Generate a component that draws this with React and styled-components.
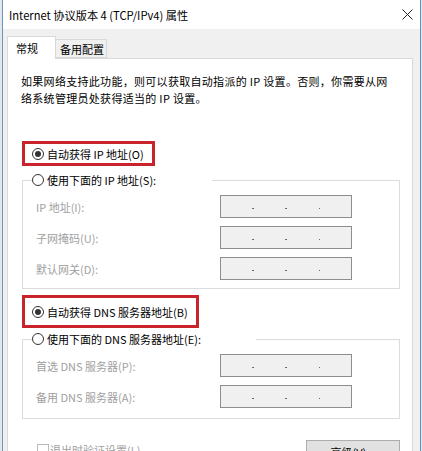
import React from "react";
import styled, { createGlobalStyle } from "styled-components";

const Global = createGlobalStyle`
  html, body { margin: 0; padding: 0; background: #dfe7ef; }
  body { font-family: "Noto Sans CJK SC", "Noto Sans", sans-serif; font-size: 11px; color: #000; }
  * { box-sizing: border-box; }
`;

const Window = styled.div`
  margin-left: 2px;
  width: 419px;
  height: 451px;
  border-left: 1px solid #7393b6;
  border-right: 1px solid #5f8fc4;
  background: #f0f0f0;
  display: flex;
  flex-direction: column;
  overflow: hidden;
`;

const TitleBar = styled.div`
  height: 29px;
  flex: none;
  background: #fff;
  display: flex;
  align-items: center;
  padding-left: 6px;
`;

const Title = styled.div`
  flex: 1;
  font-size: 11.2px;
  line-height: 16px;
  padding-top: 1px;
  white-space: nowrap;
`;

const CloseButton = styled.div`
  width: 26px;
  height: 29px;
  display: flex;
  align-items: center;
  justify-content: center;
`;

const Body = styled.div`
  flex: 1;
  padding: 7px 7px 0 4px;
  display: flex;
  flex-direction: column;
`;

const Tabs = styled.div`
  display: flex;
  align-items: flex-end;
  height: 23px;
  margin-bottom: -1px;
  position: relative;
  z-index: 1;
`;

const Tab = styled.div`
  height: ${(p) => (p.$active ? 23 : 19)}px;
  padding: ${(p) => (p.$active ? "0 17px 0 8px" : "0 2px 0 4px")};
  margin-bottom: ${(p) => (p.$active ? 0 : 1)}px;
  background: ${(p) => (p.$active ? "#fff" : "#f0f0f0")};
  border: 1px solid #d9d9d9;
  border-bottom: ${(p) => (p.$active ? "none" : "1px solid #d9d9d9")};
  border-left: ${(p) => (p.$active ? "1px solid #d9d9d9" : "none")};
  display: flex;
  align-items: center;
  font-size: 11px;
  white-space: nowrap;
`;

const Panel = styled.div`
  flex: 1;
  background: #fff;
  border: 1px solid #d9d9d9;
  border-bottom: none;
  padding: 14px 12px 0 14px;
  display: flex;
  flex-direction: column;
`;

const Desc = styled.p`
  margin: 0 0 0 -1px;
  line-height: 17px;
  font-size: 11px;
  letter-spacing: 0.3px;
  white-space: nowrap;
`;

const Highlight = styled.div`
  align-self: flex-start;
  margin-top: ${(p) => p.$mt}px;
  height: ${(p) => p.$h}px;
  border: 3px solid #c9232b;
  padding: 0 8px 0 7px;
  display: flex;
  align-items: center;
`;

const RadioRow = styled.label`
  display: flex;
  align-items: center;
  gap: 3px;
  white-space: nowrap;
  font-size: 11px;
  line-height: 16px;
`;

const RadioCircle = styled.span`
  width: 12px;
  height: 12px;
  flex: none;
  border-radius: 50%;
  border: 1px solid #333;
  background: #fff;
  display: flex;
  align-items: center;
  justify-content: center;
  &::after {
    content: "";
    width: 6px;
    height: 6px;
    border-radius: 50%;
    background: ${(p) => (p.$checked ? "#333" : "transparent")};
  }
`;

const Group = styled.fieldset`
  margin: ${(p) => p.$mt}px 0 0 0;
  border: 1px solid #dcdcdc;
  padding: 0 13px ${(p) => p.$pb}px 13px;
  min-width: 0;
`;

const Legend = styled.legend`
  width: ${(p) => p.$w}px;
  height: 16px;
  padding: 0;
  margin-left: -4px;
  display: flex;
  align-items: center;
`;

const Rows = styled.div`
  margin-top: 7px;
  display: flex;
  flex-direction: column;
  gap: 8px;
`;

const FieldRow = styled.div`
  display: grid;
  grid-template-columns: 184px 132px;
  align-items: center;
`;

const FieldLabel = styled.span`
  color: #a0a0a0;
  white-space: nowrap;
  font-size: 11px;
`;

const IpBox = styled.div`
  height: 23px;
  border: 1px solid #8e8e8e;
  background: #f0f0f0;
  display: flex;
  align-items: center;
`;

const Seg = styled.span`
  flex: 1;
`;

const Dot = styled.span`
  width: 3px;
  height: 2px;
  display: flex;
  justify-content: center;
  margin-top: 4px;
  &::after {
    content: "";
    width: 1.5px;
    height: 1.5px;
    background: #6a6a6a;
  }
`;

const Footer = styled.div`
  margin-top: 21px;
  display: flex;
  justify-content: space-between;
  align-items: flex-start;
  padding-left: 15px;
`;

const CheckRow = styled.label`
  display: flex;
  align-items: center;
  gap: 1px;
  margin-top: 2px;
  color: #a0a0a0;
  white-space: nowrap;
`;

const CheckBox = styled.span`
  width: 12px;
  height: 12px;
  border: 1px solid #bcbcbc;
  background: #fff;
`;

const Button = styled.div`
  width: 94px;
  height: 23px;
  background: #e1e1e1;
  border: 1px solid #adadad;
  display: flex;
  align-items: center;
  justify-content: center;
  white-space: nowrap;
`;

function Radio({ checked, children }) {
  return (
    <RadioRow>
      <RadioCircle $checked={checked} />
      <span>{children}</span>
    </RadioRow>
  );
}

function IpField({ label }) {
  return (
    <FieldRow>
      <FieldLabel>{label}</FieldLabel>
      <IpBox>
        <Seg />
        <Dot />
        <Seg />
        <Dot />
        <Seg />
        <Dot />
        <Seg />
      </IpBox>
    </FieldRow>
  );
}

export default function App() {
  return (
    <>
      <Global />
      <Window>
        <TitleBar>
          <Title>Internet 协议版本 4 (TCP/IPv4) 属性</Title>
          <CloseButton>
            <svg width="11" height="11" viewBox="0 0 11 11">
              <path d="M0.5 0.5 L10.5 10.5 M10.5 0.5 L0.5 10.5" stroke="#222" strokeWidth="1" fill="none" />
            </svg>
          </CloseButton>
        </TitleBar>
        <Body>
          <Tabs>
            <Tab $active>常规</Tab>
            <Tab>备用配置</Tab>
          </Tabs>
          <Panel>
            <Desc>
              如果网络支持此功能，则可以获取自动指派的 IP 设置。否则，你需要从网
              <br />
              络系统管理员处获得适当的 IP 设置。
            </Desc>
            <Highlight $mt={34} $h={25}>
              <Radio checked>自动获得 IP 地址(O)</Radio>
            </Highlight>
            <Group $mt={6} $pb={8}>
              <Legend $w={180}>
                <Radio>使用下面的 IP 地址(S):</Radio>
              </Legend>
              <Rows>
                <IpField label="IP 地址(I):" />
                <IpField label="子网掩码(U):" />
                <IpField label="默认网关(D):" />
              </Rows>
            </Group>
            <Highlight $mt={6} $h={33}>
              <Radio checked>自动获得 DNS 服务器地址(B)</Radio>
            </Highlight>
            <Group $mt={3} $pb={10}>
              <Legend $w={224}>
                <Radio>使用下面的 DNS 服务器地址(E):</Radio>
              </Legend>
              <Rows>
                <IpField label="首选 DNS 服务器(P):" />
                <IpField label="备用 DNS 服务器(A):" />
              </Rows>
            </Group>
            <Footer>
              <CheckRow>
                <CheckBox />
                <span>退出时验证设置(L)</span>
              </CheckRow>
              <Button>高级(V)...</Button>
            </Footer>
          </Panel>
        </Body>
      </Window>
    </>
  );
}
